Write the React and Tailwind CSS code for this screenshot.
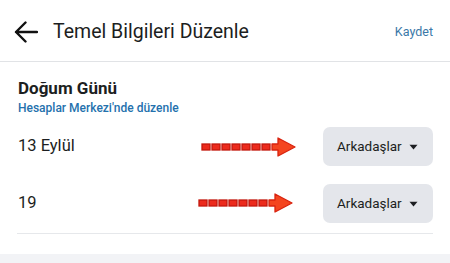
import React from "react";

function RedArrow({ className }) {
  const dashes = [0, 10, 20, 30, 40, 50, 60];
  return (
    <svg className={className} width="96" height="20" viewBox="0 0 96 20">
      {dashes.map((x) => (
        <rect key={x} x={x + 1} y="7" width="8" height="6" fill="#ec2a1c" stroke="#c3170d" strokeWidth="1.3" />
      ))}
      <path d="M71 7 H77 V1 L94 10 L77 19 V13 H71 Z" fill="#f4451f" stroke="#d9230f" strokeWidth="1.3" strokeLinejoin="round" />
    </svg>
  );
}

function Dropdown() {
  return (
    <div className="flex h-[39px] w-[110px] items-center justify-between rounded-[7px] bg-[#e4e6eb] pl-[14px] pr-[15px]">
      <span className="text-[13.5px] font-normal leading-none text-[#1c1e21]">Arkadaşlar</span>
      <svg width="9" height="6" viewBox="0 0 9 6">
        <path d="M0.5 0.8 H8.5 L4.5 5.4 Z" fill="#1c1e21" />
      </svg>
    </div>
  );
}

export default function App() {
  return (
    <div className="flex min-h-[263px] w-[450px] flex-col bg-white" style={{ fontFamily: "Roboto, 'Noto Sans', sans-serif" }}>
      <header className="flex h-[62px] items-center border-b border-[#e1e3e6] pl-[14px] pr-[17px] pt-[3px]">
        <svg width="24" height="24" viewBox="0 0 24 24">
          <path d="M23 12 H2 M11.5 2.5 L2 12 L11.5 21.5" fill="none" stroke="#111" strokeWidth="2.4" strokeLinecap="round" strokeLinejoin="round" />
        </svg>
        <h1 className="ml-[15px] text-[19.5px] leading-none text-[#1c1e21]">Temel Bilgileri Düzenle</h1>
        <span className="ml-auto text-[12.5px] leading-none text-[#3a78a8]">Kaydet</span>
      </header>

      <section className="px-[17px] pt-[16px]">
        <h2 className="pl-[1px] text-[17px] font-bold leading-[21px] text-[#1c1e21]">Doğum Günü</h2>
        <p className="mt-[1px] pl-[1px] text-[12px] font-medium leading-[16px] text-[#2471ad]">Hesaplar Merkezi'nde düzenle</p>

        <div className="relative mt-[11px] flex items-center justify-between">
          <span className="pl-[1px] text-[16.5px] leading-none text-[#1c1e21]">13 Eylül</span>
          <RedArrow className="absolute left-[184px] top-[10px]" />
          <Dropdown />
        </div>

        <div className="relative mt-[18px] flex items-center justify-between">
          <span className="pl-[1px] text-[16.5px] leading-none text-[#1c1e21]">19</span>
          <RedArrow className="absolute left-[181px] top-[9px]" />
          <Dropdown />
        </div>

        <div className="mt-[10px] h-px bg-[#e6e8eb]" />
      </section>

      <div className="mt-[20px] h-[10px] flex-1 bg-[#f2f3f6]" />
    </div>
  );
}
